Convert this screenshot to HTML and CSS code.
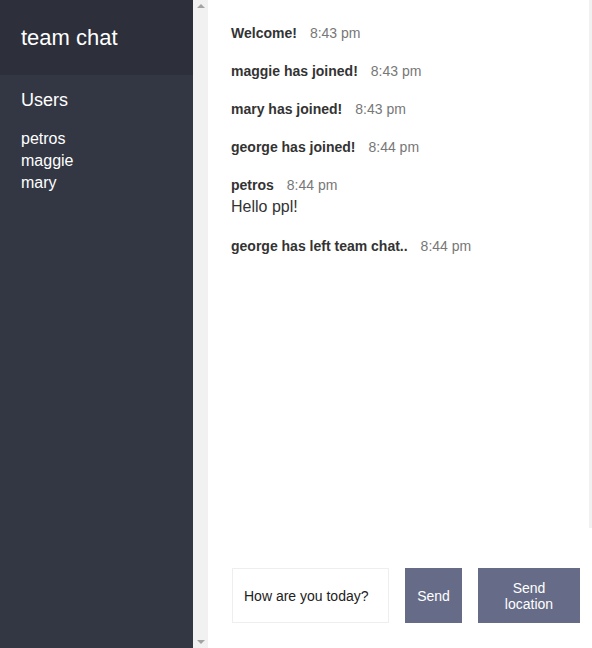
FILE: index.html
```html
<!DOCTYPE html>
<html>
<head>
<meta charset="utf-8">
<link rel="stylesheet" href="styles.css">
</head>
<body>
<div class="chat">
  <aside class="sidebar">
    <h2 class="room-title">team chat</h2>
    <h3 class="list-title">Users</h3>
    <ul class="users">
      <li>petros</li>
      <li>maggie</li>
      <li>mary</li>
    </ul>
  </aside>
  <div class="scrollbar">
    <span class="arrow-up"></span>
    <span class="arrow-down"></span>
  </div>
  <main class="main">
    <div class="messages-wrap">
      <div class="messages">
        <div class="message"><p class="meta"><span class="name">Welcome!</span><span class="time">8:43 pm</span></p></div>
        <div class="message"><p class="meta"><span class="name">maggie has joined!</span><span class="time">8:43 pm</span></p></div>
        <div class="message"><p class="meta"><span class="name">mary has joined!</span><span class="time">8:43 pm</span></p></div>
        <div class="message"><p class="meta"><span class="name">george has joined!</span><span class="time">8:44 pm</span></p></div>
        <div class="message"><p class="meta"><span class="name">petros</span><span class="time">8:44 pm</span></p><p class="text">Hello ppl!</p></div>
        <div class="message"><p class="meta"><span class="name">george has left team chat..</span><span class="time">8:44 pm</span></p></div>
      </div>
      <div class="vscroll"></div>
    </div>
    <div class="compose">
      <form class="compose-form">
        <input class="compose-input" type="text" value="How are you today?">
        <button class="btn btn-send" type="button">Send</button>
      </form>
      <button class="btn btn-location" type="button">Send location</button>
    </div>
  </main>
</div>
</body>
</html>
```
FILE: styles.css
```css
* { box-sizing: border-box; }
html, body { margin: 0; padding: 0; }
body {
  font-family: "Liberation Sans", Arial, sans-serif;
  color: #333;
  background: #fff;
  overflow: hidden;
}
.chat {
  display: flex;
  height: 648px;
  width: 592px;
}
.sidebar {
  width: 193px;
  flex-shrink: 0;
  background: #333744;
  color: #fff;
}
.room-title {
  margin: 0;
  height: 75px;
  padding: 0 21px;
  display: flex;
  align-items: center;
  font-size: 22px;
  font-weight: 400;
  background: #2d2f3b;
}
.list-title {
  margin: 0;
  padding: 14px 21px 0;
  font-size: 18px;
  font-weight: 400;
  line-height: 22px;
}
.users {
  list-style: none;
  margin: 0;
  padding: 17px 21px 0;
  font-size: 16px;
  line-height: 22px;
}
.scrollbar {
  width: 15px;
  flex-shrink: 0;
  background: #f1f1f1;
  display: flex;
  flex-direction: column;
  justify-content: space-between;
  align-items: center;
  padding: 4px 0 4px;
}
.arrow-up, .arrow-down {
  width: 0;
  height: 0;
  border-left: 4px solid transparent;
  border-right: 4px solid transparent;
}
.arrow-up { border-bottom: 4px solid #a3a3a3; }
.arrow-down { border-top: 4px solid #a3a3a3; }
.main {
  flex: 1;
  display: flex;
  flex-direction: column;
  min-width: 0;
}
.messages-wrap {
  flex: 1;
  display: flex;
}
.messages {
  flex: 1;
  padding: 25px 0 0 23px;
}
.vscroll {
  width: 3px;
  background: #f1f1f1;
}
.message { margin-bottom: 22px; }
.meta {
  margin: 0;
  font-size: 14px;
  line-height: 16px;
}
.name {
  font-weight: 700;
  color: #333;
  margin-right: 13px;
}
.time { color: #777; }
.text {
  margin: 5px 0 0;
  font-size: 16px;
  line-height: 18px;
}
.compose {
  display: flex;
  padding: 40px 12px 25px 24px;
  flex-shrink: 0;
}
.compose-form {
  display: flex;
  flex: 1;
  margin: 0 16px 0 0;
}
.compose-input {
  flex: 1;
  min-width: 0;
  width: 157px;
  height: 55px;
  border: 1px solid #eee;
  padding: 0 11px;
  margin: 0 16px 0 0;
  font-family: "Liberation Sans", Arial, sans-serif;
  font-size: 14px;
  color: #222;
  outline: none;
}
.btn {
  border: none;
  background: #666c87;
  color: #fff;
  font-family: "Liberation Sans", Arial, sans-serif;
  font-size: 14px;
  line-height: 16px;
  height: 55px;
  padding: 0 12px;
}
.btn-send { width: 57px; }
.btn-location { width: 102px; flex-shrink: 0; }
```
